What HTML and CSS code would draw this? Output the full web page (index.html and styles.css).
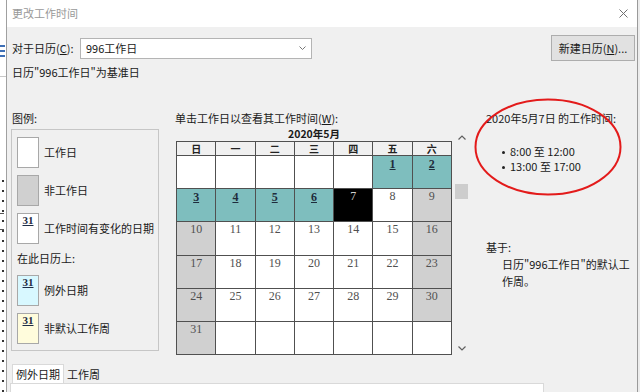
FILE: index.html
```html
<!DOCTYPE html>
<html lang="zh-CN">
<head>
<meta charset="utf-8">
<title>更改工作时间</title>
<link rel="stylesheet" href="styles.css">
</head>
<body>
<div class="screen">
  <div class="bg-strip"></div>
  <div class="dialog">
    <div class="titlebar">
      <span class="title">更改工作时间</span>
      <svg class="close" width="9" height="9" viewBox="0 0 9 9"><path d="M0.5 0.5L8.5 8.5M8.5 0.5L0.5 8.5" stroke="#707070" stroke-width="1"/></svg>
    </div>
    <div class="body">
      <div class="row-cal">
        <span class="lbl-cal">对于日历(<u>C</u>):</span>
        <div class="select">
          <span>996工作日</span>
          <svg class="chev" width="7" height="4" viewBox="0 0 7 4"><path d="M0.5 0.5L3.5 3.5L6.5 0.5" fill="none" stroke="#777" stroke-width="1"/></svg>
        </div>
        <button class="btn">新建日历(<u>N</u>)...</button>
      </div>
      <div class="base-note">日历"996工作日"为基准日</div>

      <div class="main">
        <div class="legend-col">
          <div class="col-label">图例:</div>
          <div class="legend-box">
            <div class="legend-item"><span class="sw sw-white"></span><span>工作日</span></div>
            <div class="legend-item"><span class="sw sw-gray"></span><span>非工作日</span></div>
            <div class="legend-item"><span class="sw sw-white"><span class="sw-num">31</span></span><span>工作时间有变化的日期</span></div>
            <div class="sub-label">在此日历上:</div>
            <div class="legend-item push"><span class="sw sw-cyan"><span class="sw-num">31</span></span><span>例外日期</span></div>
            <div class="legend-item"><span class="sw sw-yellow"><span class="sw-num">31</span></span><span>非默认工作周</span></div>
          </div>
        </div>

        <div class="cal-col">
          <div class="col-label">单击工作日以查看其工作时间(<u>W</u>):</div>
          <div class="cal-month">2020年5月</div>
          <div class="cal-grid">
            <div class="hd">日</div><div class="hd">一</div><div class="hd">二</div><div class="hd">三</div><div class="hd">四</div><div class="hd">五</div><div class="hd">六</div>

            <div class="c"></div><div class="c"></div><div class="c"></div><div class="c"></div><div class="c"></div><div class="t b">1</div><div class="t b">2</div>

            <div class="t b">3</div><div class="t b">4</div><div class="t b">5</div><div class="t b">6</div><div class="k">7</div><div class="c">8</div><div class="g">9</div>

            <div class="g">10</div><div class="c">11</div><div class="c">12</div><div class="c">13</div><div class="c">14</div><div class="c">15</div><div class="g">16</div>

            <div class="g">17</div><div class="c">18</div><div class="c">19</div><div class="c">20</div><div class="c">21</div><div class="c">22</div><div class="g">23</div>

            <div class="g">24</div><div class="c">25</div><div class="c">26</div><div class="c">27</div><div class="c">28</div><div class="c">29</div><div class="g">30</div>

            <div class="g">31</div><div class="c"></div><div class="c"></div><div class="c"></div><div class="c"></div><div class="c"></div><div class="c"></div>
          </div>
        </div>

        <div class="scroll-col">
          <svg class="arrow-up" width="8" height="5" viewBox="0 0 8 5"><path d="M0.5 4.5L4 1L7.5 4.5" fill="none" stroke="#606060" stroke-width="1.2"/></svg>
          <div class="thumb"></div>
          <svg class="arrow-down" width="8" height="5" viewBox="0 0 8 5"><path d="M0.5 0.5L4 4L7.5 0.5" fill="none" stroke="#606060" stroke-width="1.2"/></svg>
        </div>

        <div class="info-col">
          <div class="col-label">2020年5月7日 的工作时间:</div>
          <ul class="hours">
            <li><span class="dot"></span>8:00 至 12:00</li>
            <li><span class="dot"></span>13:00 至 17:00</li>
          </ul>
          <div class="based">基于:</div>
          <div class="based-text">日历"996工作日"的默认工<br>作周。</div>
        </div>
      </div>

      <div class="tabs">
        <span class="tab active">例外日期</span>
        <span class="tab">工作周</span>
      </div>
      <div class="tab-panel"></div>
    </div>
  </div>
  <div class="edge"></div>
  <svg class="circle" width="152" height="102" viewBox="0 0 152 102"><ellipse cx="75" cy="51" rx="72.5" ry="47.5" fill="none" stroke="#e31b1b" stroke-width="2"/></svg>
</div>
</body>
</html>
```

FILE: styles.css
```css
html, body {
  margin: 0;
  padding: 0;
}
body {
  width: 640px;
  height: 392px;
  overflow: hidden;
  font-family: "Noto Sans CJK SC", "Noto Sans", sans-serif;
  font-size: 11px;
  color: #1a1a1a;
  background: #fff;
}
u { text-decoration: underline; text-underline-offset: 1px; }

.screen {
  position: relative;
  display: flex;
  height: 392px;
  overflow: hidden;
}

.bg-strip {
  width: 6px;
  flex: none;
  background:
    linear-gradient(#3d6fb6, #3d6fb6) 0 45px / 5px 2px no-repeat,
    linear-gradient(#3d6fb6, #3d6fb6) 0 50px / 5px 2px no-repeat,
    linear-gradient(#3d6fb6, #3d6fb6) 0 55px / 5px 2px no-repeat,
    linear-gradient(#c8c8c8, #c8c8c8) 0 76px / 6px 1px no-repeat,
    linear-gradient(#555, #555) 0 213px / 4px 1px no-repeat,
    linear-gradient(#555, #555) 0 229px / 4px 1px no-repeat,
    repeating-linear-gradient(to bottom, transparent 0 8px, #333 8px 10px) 2px 172px / 2px 220px no-repeat,
    #fff;
}

.dialog {
  width: 630px;
  height: 392px;
  flex: none;
  border-left: 1px solid #a0a0a0;
  border-right: 1px solid #9a9a9a;
  background: #f0f0f0;
  display: flex;
  flex-direction: column;
  overflow: hidden;
}

.edge {
  flex: 1;
  background: #ececec;
}

.titlebar {
  height: 27px;
  flex: none;
  background: #fff;
  display: flex;
  align-items: center;
  padding-left: 5px;
}
.title {
  color: #999;
  line-height: 15px;
}
.close {
  margin-left: auto;
  margin-right: 9px;
}

.body {
  flex: 1;
  min-height: 0;
  padding: 0 2px 0 4px;
  display: flex;
  flex-direction: column;
}

.row-cal {
  display: flex;
  align-items: center;
  height: 26px;
  margin-top: 8px;
}
.lbl-cal {
  width: 68px;
  padding-left: 1px;
  line-height: 15px;
}
.select {
  width: 232px;
  height: 21px;
  box-sizing: border-box;
  border: 1px solid #b4b4b4;
  background: #fff;
  display: flex;
  align-items: center;
  padding: 0 5px;
  line-height: 15px;
}
.chev { margin-left: auto; }
.btn {
  margin-left: auto;
  width: 84px;
  height: 26px;
  box-sizing: border-box;
  border: 1px solid #adadad;
  background: #e1e1e1;
  font: inherit;
  color: #1a1a1a;
  padding: 0;
  line-height: 15px;
}

.base-note {
  margin-top: 4px;
  padding-left: 1px;
  line-height: 15px;
}

.main {
  margin-top: 31px;
  display: flex;
  align-items: flex-start;
  flex: none;
}
.col-label {
  line-height: 15px;
  white-space: nowrap;
}

.legend-col {
  width: 148px;
  flex: none;
}
.legend-col .col-label { padding-left: 1px; }
.legend-box {
  margin-top: 3px;
  box-sizing: border-box;
  width: 148px;
  border: 1px solid #c6c6c6;
  padding: 7px 0 6px 5px;
  display: flex;
  flex-direction: column;
  gap: 7px;
}
.legend-item {
  display: flex;
  align-items: center;
  gap: 5px;
  line-height: 15px;
}
.legend-item.push { margin-top: 2px; }
.sub-label {
  line-height: 15px;
}
.sw {
  width: 22px;
  height: 31px;
  box-sizing: border-box;
  border: 1px solid #a8a8a8;
  flex: none;
  display: flex;
  justify-content: center;
}
.sw-white { background: #fff; }
.sw-gray { background: #d0d0d0; }
.sw-cyan { background: #d8f8ff; }
.sw-yellow { background: #fffcdc; }
.sw-num {
  font-family: "Liberation Serif", "DejaVu Serif", serif;
  font-weight: 700;
  font-size: 11px;
  line-height: 11px;
  margin-top: 1px;
  color: #1e2c44;
  text-decoration: underline;
  text-underline-offset: 1px;
}

.cal-col {
  margin-left: 16px;
  width: 277px;
  flex: none;
}
.cal-month {
  margin-top: 2px;
  padding-left: 1px;
  text-align: center;
  font-weight: 700;
  font-size: 10.5px;
  line-height: 12px;
}
.cal-grid {
  margin-top: 1px;
  margin-left: 1px;
  width: 276px;
  height: 214px;
  box-sizing: border-box;
  display: grid;
  grid-template-columns: repeat(7, 1fr);
  grid-template-rows: 13px repeat(6, 1fr);
  gap: 1px;
  padding: 1px;
  background: #505050;
}
.cal-grid > div {
  text-align: center;
  font-family: "Liberation Serif", "DejaVu Serif", serif;
  font-size: 12px;
  line-height: 12px;
  padding-top: 1px;
  color: #505050;
}
.cal-grid > .hd {
  background: #f0f0f0;
  font-family: "Noto Sans CJK SC", sans-serif;
  font-weight: 700;
  font-size: 10px;
  line-height: 12px;
  padding-top: 1px;
  color: #222;
}
.cal-grid > .c { background: #fff; }
.cal-grid > .g { background: #d0d0d0; }
.cal-grid > .t { background: #7ebebe; }
.cal-grid > .k { background: #000; color: #d0d0d0; }
.cal-grid > .b {
  font-weight: 700;
  color: #1e2c3c;
  text-decoration: underline;
  text-underline-offset: 1px;
  padding-top: 2px;
}

.scroll-col {
  width: 17px;
  margin-left: 1px;
  flex: none;
  display: flex;
  flex-direction: column;
  align-items: center;
  padding-top: 24px;
}
.thumb {
  margin-top: 44px;
  width: 13px;
  height: 15px;
  background: #cdcdcd;
}
.arrow-down { margin-top: 147px; }

.info-col {
  margin-left: 16px;
  flex: 1;
}
.hours {
  list-style: none;
  margin: 18px 0 0;
  padding: 0 0 0 16px;
  line-height: 15px;
}
.dot {
  display: inline-block;
  width: 3px;
  height: 3px;
  border-radius: 50%;
  background: #222;
  vertical-align: middle;
  margin-right: 5px;
  position: relative;
  top: -1px;
}
.based {
  margin-top: 66px;
  line-height: 15px;
}
.based-text {
  margin-top: 1px;
  padding-left: 16px;
  line-height: 17px;
  white-space: nowrap;
}

.tabs {
  margin-top: 9px;
  display: flex;
  align-items: flex-end;
  padding-left: 1px;
  height: 19px;
  flex: none;
}
.tab {
  line-height: 18px;
  padding: 0 3px;
}
.tab.active {
  background: #fff;
  border: 1px solid #d9d9d9;
  border-bottom: none;
}
.tab-panel {
  flex: 1;
  margin-left: -1px;
  width: 534px;
  box-sizing: border-box;
  background: #fff;
  border: 1px solid #d9d9d9;
  border-bottom: none;
}

.circle {
  position: absolute;
  left: 473px;
  top: 96px;
}
```
